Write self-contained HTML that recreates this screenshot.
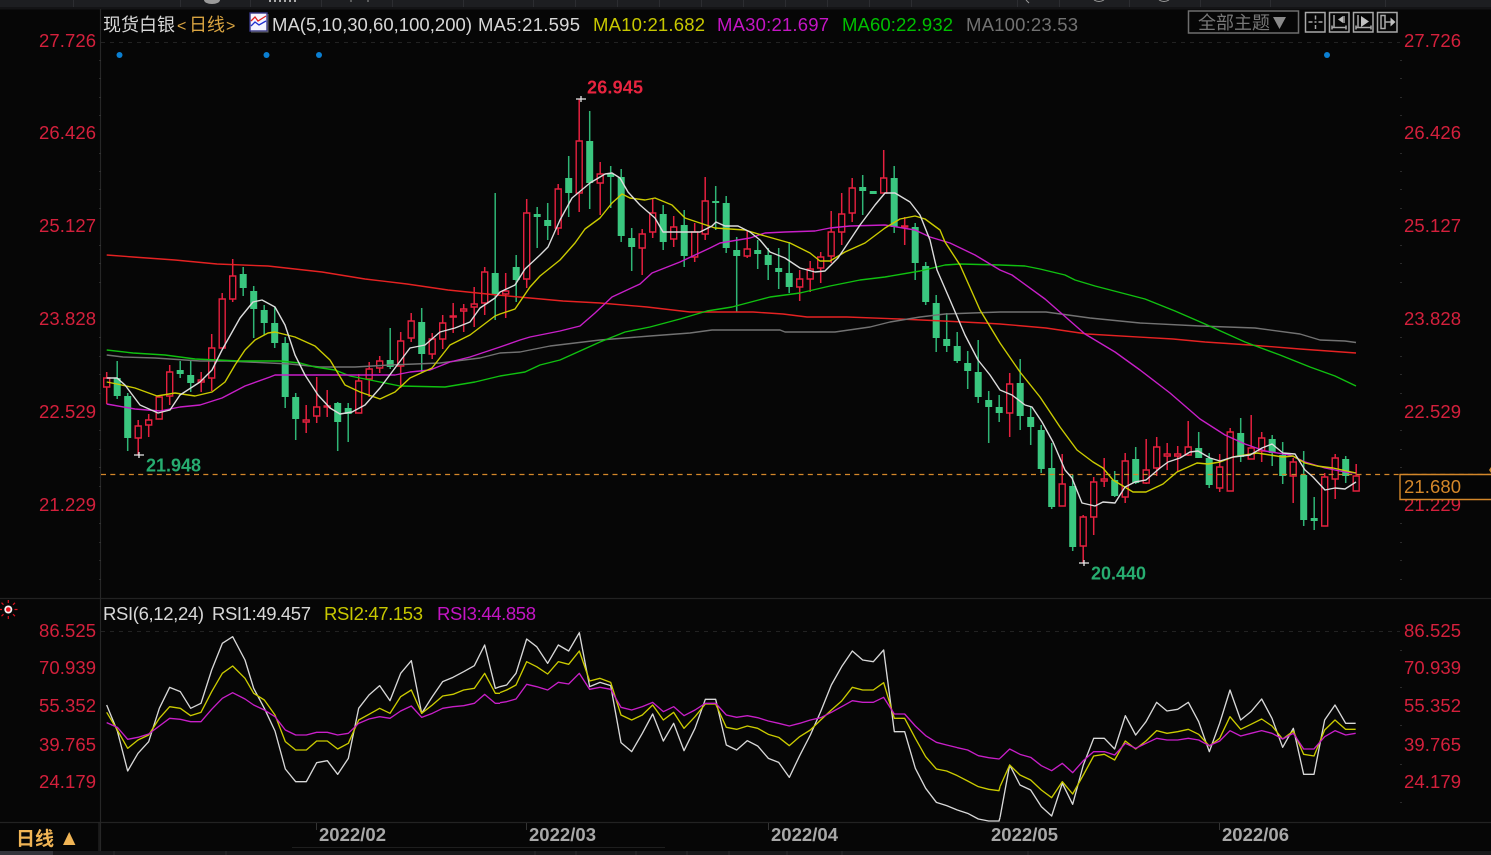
<!DOCTYPE html>
<html lang="zh"><head><meta charset="utf-8"><title>现货白银 日线</title>
<style>
html,body{margin:0;padding:0;background:#060606;width:1491px;height:855px;overflow:hidden}
svg{display:block;position:absolute;left:0;top:0;filter:blur(.35px)}
text{font-family:"Liberation Sans","Noto Sans CJK SC",sans-serif;font-size:18.5px}
.r text{fill:#d4203c}
</style></head><body>
<svg width="1491" height="855" viewBox="0 0 1491 855" xmlns="http://www.w3.org/2000/svg">
<rect width="1491" height="855" fill="#060606"/>
<!-- top strip -->
<rect width="1491" height="7" fill="#1d1e21"/><rect y="7" width="1491" height="2.5" fill="#141416"/>
<path d="M73.5 0V7M180.5 0V7M250.5 0V7M321.5 0V7M392.5 0V7M463.5 0V7M533.5 0V7M575.5 0V7M617.5 0V7M659.5 0V7M701.5 0V7M743.5 0V7M785.5 0V7M827.5 0V7M869.5 0V7M911.5 0V7M1017.5 0V7M1059.5 0V7M1129.5 0V7M1200.5 0V7M1270.5 0V7M1385.5 0V7" stroke="#2c2d31" stroke-width="1"/>
<path d="M204 0h16a8 4 0 0 1-16 0z" fill="#9a9a9a"/>
<path d="M269 0v2h2v-2zM274 0v2h2v-2zM279 0v2h2v-2zM284 0v2h2v-2zM289 0v2h2v-2zM294 0v2h2v-2z" fill="#aaa"/>
<path d="M351 0v2M368 0v2M1026 0l3 3M1094 0q5 3 10 0M1159 0q5 3 10 0" stroke="#999" fill="none"/>
<!-- frame -->
<path d="M0 598.5H1491M0 822.5H1491" stroke="#222" stroke-width="1.2"/>
<path d="M100.5 9V851M99 822V851" stroke="#262626" stroke-width="1.2"/>
<path d="M292 847.5H665" stroke="#1e1e1e"/>
<path d="M101 42.5H1400M101 631.5H1400" stroke="#222" stroke-dasharray="4 5"/>
<path d="M100 60v1M100 78v1M100 97v1M100 115v1M100 153v1M100 171v1M100 189v1M100 208v1M100 245v1M100 263v1M100 282v1M100 337v1M100 356v1M100 374v1M100 393v1M100 430v1M100 449v1M100 467v1M100 486v1M100 523v1M100 542v1M100 560v1M100 579v1M1401 60v1M1401 78v1M1401 97v1M1401 115v1M1401 153v1M1401 171v1M1401 189v1M1401 208v1M1401 245v1M1401 263v1M1401 282v1M1401 337v1M1401 356v1M1401 374v1M1401 393v1M1401 430v1M1401 449v1M1401 467v1M1401 523v1M1401 542v1M1401 560v1M1401 579v1M1401 650v1M1401 687v1M1401 725v1M1401 764v1M1401 802v1" stroke="#3a3a3a" stroke-width="1.4"/>
<path d="M316.5 823v7M526.5 823v7M768.5 823v7M1219.5 823v7" stroke="#333"/>
<!-- bottom strip -->
<rect y="851" width="1491" height="4" fill="#19191b"/><rect y="851" width="53" height="4" fill="#33343a"/>
<path d="M114 851v4M226 851v4M535 851v4M576 851v4M636 851v4M687 851v4M729 851v4M787 851v4M842 851v4M1028 851v4" stroke="#2c2c2e"/>
<!-- blue dots -->
<g fill="#0a7fd2"><circle cx="119.5" cy="55" r="3"/><circle cx="266.5" cy="55" r="3"/><circle cx="319" cy="55" r="3"/><circle cx="1327" cy="55" r="3"/></g>
<!-- wicks -->
<path fill="none" stroke="#2fb575" stroke-width="1.5" d="M117.2 361V399M127.7 393V451M180.2 361V378M190.7 361V392M243.2 267V296M253.7 286V338M264.2 305V335M274.7 307V348M285.2 337V408M295.7 393V440M337.7 402V451M348.2 403V442M390.2 328V369M421.7 308V372M495.2 193V320M516.2 255V302M537.2 207V248M547.7 203V240M568.7 156V217M589.7 111V209M610.7 166V208M621.2 169V242M631.7 228V271M663.2 205V250M684.2 210V267M715.7 186V230M726.2 196V253M736.7 237V312M757.7 240V269M768.2 248V280M778.7 248V289M789.2 242V293M862.7 175V215M894.2 166V233M915.2 223V280M925.7 262V305M936.2 295V352M946.7 313V352M957.2 332V363M967.7 351V389M978.2 340V403M988.7 391V443M999.2 395V422M1020.2 359V430M1030.7 407V445M1041.2 425V473M1051.7 443V509M1072.7 475V551M1114.7 471V497M1135.7 447V484M1198.7 432V458M1209.2 453V488M1240.7 418V462M1272.2 435V466M1282.7 442V484M1303.7 451V526M1314.2 497V530M1345.7 456V483"/>
<path fill="none" stroke="#e5203f" stroke-width="1.5" d="M106.7 372V404M138.2 420V455M148.7 414V437M159.2 395V419M169.7 365V405M201.2 372V392M211.7 334V391M222.2 293V348M232.7 259V302M306.2 405V433M316.7 377V423M327.2 390V417M358.7 374V413M369.2 362V397M379.7 356V373M400.7 332V388M411.2 313V342M432.2 333V359M442.7 315V349M453.2 303V333M463.7 304V332M474.2 287V327M484.7 267V315M505.7 273V318M526.7 199V288M558.2 184V235M579.2 99V212M600.2 162V215M642.2 229V275M652.7 199V238M673.7 216V247M694.7 223V262M705.2 177V240M747.2 230V258M799.7 270V301M810.2 261V292M820.7 252V283M831.2 211V263M841.7 193V245M852.2 178V222M883.7 150V193M904.7 217V245M1009.7 373V437M1062.2 454V506M1083.2 515V563M1093.7 477V535M1104.2 458V487M1125.2 453V503M1146.2 439V484M1156.7 437V476M1167.2 443V470M1177.7 446V472M1188.2 421V456M1219.7 454V492M1230.2 428V491M1251.2 415V459M1261.7 432V462M1293.2 458V503M1324.7 473V526M1335.2 454V499M1356.2 464V491"/>
<!-- green bodies -->
<path fill="#3ac77f" d="M113.7 378h7V396h-7zM124.2 396h7V438h-7zM176.7 370h7V374h-7zM187.2 375h7V383h-7zM239.7 274h7V288h-7zM250.2 291h7V309h-7zM260.7 310h7V323h-7zM271.2 323h7V343h-7zM281.7 343h7V397h-7zM292.2 397h7V419h-7zM334.2 403h7V422h-7zM344.7 408h7V414h-7zM386.7 360h7V367h-7zM418.2 322h7V354h-7zM491.7 273h7V294h-7zM512.7 267h7V280h-7zM533.7 214h7V217h-7zM544.2 220h7V226h-7zM565.2 178h7V193h-7zM586.2 141h7V183h-7zM607.2 174h7V177h-7zM617.7 177h7V236h-7zM628.2 238h7V247h-7zM659.7 214h7V242h-7zM680.7 225h7V256h-7zM712.2 201h7V203h-7zM722.7 203h7V248h-7zM733.2 250h7V256h-7zM754.2 250h7V254h-7zM764.7 255h7V265h-7zM775.2 268h7V272h-7zM785.7 273h7V287h-7zM859.2 187h7V191h-7zM869.7 191h7V194h-7zM890.7 178h7V227h-7zM911.7 227h7V263h-7zM922.2 266h7V302h-7zM932.7 303h7V338h-7zM943.2 339h7V346h-7zM953.7 346h7V361h-7zM964.2 363h7V371h-7zM974.7 372h7V397h-7zM985.2 400h7V407h-7zM995.7 407h7V413h-7zM1016.7 383h7V416h-7zM1027.2 417h7V427h-7zM1037.7 430h7V469h-7zM1048.2 468h7V507h-7zM1069.2 486h7V547h-7zM1111.2 480h7V496h-7zM1132.2 459h7V483h-7zM1195.2 448h7V458h-7zM1205.7 458h7V485h-7zM1237.2 433h7V457h-7zM1268.7 439h7V453h-7zM1279.2 455h7V476h-7zM1300.2 475h7V520h-7zM1310.7 518h7V521h-7zM1342.2 459h7V476h-7z"/>
<!-- red bodies -->
<path fill="#060606" stroke="#e5203f" stroke-width="1.4" d="M103.7 378h6V387h-6zM135.2 426h6V438h-6zM145.7 420h6V425h-6zM156.2 397h6V419h-6zM166.7 372h6V396h-6zM198.2 380h6V382h-6zM208.7 348h6V378h-6zM219.2 299h6V348h-6zM229.7 276h6V299h-6zM303.2 420h6V422h-6zM313.7 407h6V416h-6zM324.2 406h6V407h-6zM355.7 381h6V413h-6zM366.2 369h6V379h-6zM376.7 361h6V368h-6zM397.7 341h6V366h-6zM408.2 321h6V338h-6zM429.2 339h6V354h-6zM439.7 323h6V339h-6zM450.2 316h6V317h-6zM460.7 309h6V311h-6zM471.2 304h6V307h-6zM481.7 272h6V303h-6zM502.7 291h6V294h-6zM523.7 213h6V279h-6zM555.2 189h6V228h-6zM576.2 141h6V193h-6zM597.2 174h6V183h-6zM639.2 234h6V248h-6zM649.7 213h6V232h-6zM670.7 227h6V239h-6zM691.7 232h6V257h-6zM702.2 201h6V234h-6zM744.2 249h6V256h-6zM796.7 279h6V287h-6zM807.2 269h6V279h-6zM817.7 257h6V268h-6zM828.2 232h6V256h-6zM838.7 214h6V232h-6zM849.2 188h6V213h-6zM880.7 178h6V193h-6zM901.7 226h6V227h-6zM1006.7 384h6V413h-6zM1059.2 484h6V506h-6zM1080.2 517h6V546h-6zM1090.7 482h6V517h-6zM1101.2 479h6V481h-6zM1122.2 461h6V497h-6zM1143.2 470h6V483h-6zM1153.7 447h6V468h-6zM1164.2 454h6V456h-6zM1174.7 454h6V456h-6zM1185.2 447h6V455h-6zM1216.7 467h6V488h-6zM1227.2 432h6V491h-6zM1248.2 448h6V459h-6zM1258.7 438h6V451h-6zM1290.2 462h6V476h-6zM1321.7 477h6V526h-6zM1332.2 458h6V479h-6zM1353.2 476h6V491h-6z"/>
<!-- last price dashed -->
<path d="M101 474.5H1491" stroke="#d4872a" stroke-width="1.3" stroke-dasharray="5 4.3"/>
<path d="M1489 470l2-3v6z" fill="#c8862a"/>
<!-- MA lines -->
<g fill="none" stroke-width="1.4" stroke-linejoin="round">
<polyline stroke="#e52222" points="106.7,255 133,257 175,260 217,264 268,266 322,272 365,279 407,284 448,290 497,295 530,298 563,301 600,303 647,307 690,312 753,312 783,314 807,317 847,317 900,319 943,321 983,323 1000,324 1046,328 1087,334 1173,339 1205,342 1250,345 1300,349 1356,353"/>
<polyline stroke="#727272" points="106.7,355 123,357 155,358 200,361 227,361 290,364 320,367 355,367 390,365 440,363 480,358 500,353 520,352 550,346 600,340 650,336 690,333 712,330 780,330 785,332 835,332 870,327 890,322 920,317 945,314 1000,312 1046,312 1090,318 1140,323 1200,326 1255,328 1300,334 1320,340 1345,341 1356,342.5"/>
<polyline stroke="#10c010" points="106.7,350 133,353 165,355 195,359 240,361 280,361 300,363 315,367 335,370 350,376 375,381 400,386 445,387 475,382 500,376 525,372 540,365 560,360 600,342 625,332 650,327 680,319 707,311 732,307 770,297 800,293 830,286 860,280 885,277 920,271 945,265 960,264 1000,265 1025,266 1040,269 1065,275 1075,280 1095,286 1145,299 1175,311 1205,324 1245,342 1280,355 1310,367 1335,376 1356,386"/>
<polyline stroke="#c81fc8" points="106.7,404 135,409 160,411 180,407 200,405 222,398 245,386 270,377 275,375 300,375 345,375 395,375 410,372 430,370 450,362 470,357 500,347 520,340 530,337 560,331 580,326 595,313 612,297 640,284 652,273 680,262 710,248 720,243 750,238 765,233 785,232 815,231 830,228 850,226 885,225 915,230 930,237 950,243 975,255 1000,270 1012,275 1045,299 1085,334 1115,352 1140,370 1170,393 1200,419 1225,435 1245,444 1265,451 1290,455 1305,462 1325,468 1345,472 1356,473"/>
<polyline stroke="#cbcb00" points="106.7,382 117,384 135,388 157,396 175,393 195,396 212,392 225,382 235,365 245,350 255,340 268,333 275,332 295,337 315,346 330,360 345,385 360,392 380,399 395,392 410,378 432,368 450,345 470,335 495,316 500,314 515,309 530,287 540,276 560,260 575,243 585,229 600,218 612,203 622,194 630,198 645,200 655,198 672,205 685,218 700,223 715,228 745,230 765,236 790,243 810,253 820,261 830,261 845,252 865,243 885,228 900,219 915,216 925,219 940,230 945,242 960,265 980,310 1000,343 1020,372 1040,397 1060,427 1077,450 1093,462 1103,468 1113,480 1133,492 1146,492 1163,484 1177,472 1197,463 1208,464 1220,462 1233,457 1257,453 1283,457 1293,456 1305,463 1317,466 1333,468 1356,473"/>
<polyline stroke="#dcdcdc" points="106.7,378 117,378 125,385 140,405 158,413 170,410 180,395 200,382 212,370 222,350 240,318 253,302 262,300 275,307 285,325 295,355 305,375 318,395 330,408 340,414 352,412 365,405 380,388 395,368 410,348 425,345 440,332 455,328 470,322 480,308 495,298 500,292 515,285 525,269 540,255 548,247 560,220 572,198 590,183 605,174 612,173 620,178 628,192 640,205 655,218 663,232 672,232 700,232 712,226 716,222 725,226 738,226 750,232 760,240 770,252 785,258 800,268 815,272 825,271 838,258 850,240 860,225 875,205 885,193 895,193 910,202 920,215 930,240 937,270 950,300 965,335 978,360 990,375 1000,390 1012,395 1025,405 1032,407 1042,422 1053,442 1065,470 1072,478 1082,503 1095,506 1103,502 1115,503 1125,487 1135,482 1146,480 1160,468 1168,462 1180,458 1190,452 1198,451 1210,458 1220,461 1233,457 1250,455 1262,448 1272,444 1283,453 1295,454 1305,470 1313,477 1325,490 1335,488 1345,489 1356,482"/>
</g>
<!-- extreme markers -->
<path d="M576 99h10M581 96v6M134 455h10M139 452v6M1079 563h10M1084 560v6" stroke="#e8e8e8" stroke-width="1.3"/>
<text x="587" y="93.5" textLength="56" fill="#e8243f" font-weight="bold" style="font-size:18px">26.945</text>
<text x="146" y="471.500" textLength="55" fill="#27ad70" font-weight="bold" style="font-size:18px">21.948</text>
<text x="1091" y="579.500" textLength="55" fill="#27ad70" font-weight="bold" style="font-size:18px">20.440</text>
<!-- axis labels -->
<g class="r">
<text x="39" y="47" textLength="57">27.726</text><text x="39" y="139" textLength="57">26.426</text><text x="39" y="232" textLength="57">25.127</text><text x="39" y="325" textLength="57">23.828</text><text x="39" y="418" textLength="57">22.529</text><text x="39" y="511" textLength="57">21.229</text>
<text x="39" y="637" textLength="57">86.525</text><text x="39" y="674" textLength="57">70.939</text><text x="39" y="712" textLength="57">55.352</text><text x="39" y="751" textLength="57">39.765</text><text x="39" y="788" textLength="57">24.179</text>
<text x="1404" y="47" textLength="57">27.726</text><text x="1404" y="139" textLength="57">26.426</text><text x="1404" y="232" textLength="57">25.127</text><text x="1404" y="325" textLength="57">23.828</text><text x="1404" y="418" textLength="57">22.529</text><text x="1404" y="511" textLength="57">21.229</text>
<text x="1404" y="637" textLength="57">86.525</text><text x="1404" y="674" textLength="57">70.939</text><text x="1404" y="712" textLength="57">55.352</text><text x="1404" y="751" textLength="57">39.765</text><text x="1404" y="788" textLength="57">24.179</text>
</g>
<!-- price box -->
<rect x="1400" y="474.5" width="91" height="25" fill="#050505"/>
<path d="M1491 474.5H1400V499.5H1491" fill="none" stroke="#d4872a" stroke-width="1.4"/>
<text x="1404" y="493" textLength="57" fill="#d4872a">21.680</text>
<!-- header -->
<text x="103" y="31" fill="#d8d8d8" style="font-size:18px">现货白银</text>
<text x="177" y="31" fill="#d9a441" style="font-size:16px">&lt;</text>
<text x="189" y="31" fill="#d9a441" style="font-size:18px">日线</text>
<text x="226" y="31" fill="#d9a441" style="font-size:16px">&gt;</text>
<rect x="250" y="13" width="17" height="18" fill="#f4f4ff" stroke="#3a3a8c" stroke-width="1.4"/>
<path d="M251 21l4-4 3 4 8-5" stroke="#e02020" fill="none" stroke-width="1.3"/>
<path d="M251 26l4-4 4 3 7-4" stroke="#2030d0" fill="none" stroke-width="1.3"/>
<path d="M268 14v18h-17" stroke="#666" fill="none"/>
<text x="272" y="31" textLength="200" fill="#d8d8d8">MA(5,10,30,60,100,200)</text>
<text x="478" y="31" textLength="102" fill="#d8d8d8">MA5:21.595</text>
<text x="593" y="31" textLength="112" fill="#c8c800">MA10:21.682</text>
<text x="717" y="31" textLength="112" fill="#c415c4">MA30:21.697</text>
<text x="842" y="31" textLength="111" fill="#00c000">MA60:22.932</text>
<text x="966" y="31" textLength="112" fill="#727272">MA100:23.53</text>
<!-- theme button -->
<rect x="1188.5" y="11" width="110" height="22" fill="none" stroke="#6e6e6e" stroke-width="1.5"/>
<text x="1198" y="29" fill="#777" style="font-size:18px">全部主题</text>
<path d="M1273 17h13l-6.500 12z" fill="#8a8a8a"/>
<g fill="none" stroke="#a8a8a8" stroke-width="1.5">
<rect x="1305.500" y="12.500" width="19.500" height="19.500"/><rect x="1329.500" y="12.500" width="19.500" height="19.500"/><rect x="1353.500" y="12.500" width="19.500" height="19.500"/><rect x="1377.500" y="12.500" width="19.500" height="19.500"/>
<path d="M1315.500 15.500v4M1315.500 25v4M1308.500 22h4M1318.500 22h4M1314.500 22h2"/>
<path d="M1334 15v13M1344 16v7M1332 27.500h14M1332 25.500v4M1346 25.500v4"/>
<path d="M1358 15v13M1356 27.500h15M1356 25.500v4M1371 25.500v4"/>
<path d="M1381 15.500h4v13h-4zM1385 22h8"/>
</g>
<path d="M1338 19.500l5-3.500v7z" fill="#bbb"/>
<path d="M1361 16l8 5.500-8 5.500z" fill="#c0c0c0"/>
<path d="M1395.500 22l-5-4.500v9z" fill="#c0c0c0"/>
<!-- RSI header -->
<text x="103" y="620" textLength="101" fill="#d8d8d8">RSI(6,12,24)</text>
<text x="212" y="620" textLength="99" fill="#d8d8d8">RSI1:49.457</text>
<text x="324" y="620" textLength="99" fill="#c8c800">RSI2:47.153</text>
<text x="437" y="620" textLength="99" fill="#c415c4">RSI3:44.858</text>
<!-- red dot icon -->
<circle cx="8.300" cy="609.500" r="4" fill="#f2f2f2"/><circle cx="8.300" cy="609.500" r="2.300" fill="#e8101c"/>
<path d="M8.300 600v3M8.300 616v3M-1 609.500h3M14.500 609.500h3M1.500 602.700l2 2M13 614.200l2 2M1.500 616.200l2-2M13 604.800l2-2" stroke="#d8121f" stroke-width="1.200"/>
<!-- RSI lines -->
<g fill="none" stroke-width="4" stroke-linejoin="round">
<g stroke="#d8d8d8">
<polyline transform="translate(0 595) scale(.33333)" points="320,330 352,408 383,528 414,475 446,440 478,340 509,277 541,290 572,340 603,325 635,225 667,145 698,125 735,195 761,280 793,340 825,408 856,522 887,560 919,560 950,503 982,497 1013,538 1045,490 1076,340 1107,300 1139,272 1170,317 1202,235 1234,197 1265,355 1297,305 1328,260 1359,247 1391,230 1423,212 1454,150 1486,280 1500,275"/>
<polyline transform="translate(500 595) scale(.33333)" points="0,275 20,270 48,235 80,132 110,155 143,205 175,150 206,168 238,113 269,275 300,262 332,272 363,443 395,470 427,415 458,357 490,438 521,385 552,467 585,400 616,313 647,313 679,450 710,465 742,437 773,453 805,490 836,502 868,547 899,482 931,420 962,350 994,270 1025,215 1057,168 1088,195 1120,200 1151,165 1183,410 1214,410 1246,520 1277,580 1309,622 1340,632 1372,645 1403,655 1435,672 1466,678 1497,678 1500,668"/>
<polyline transform="translate(1000 595) scale(.33333)" points="0,668 29,510 60,570 92,585 124,635 155,663 187,565 218,628 250,510 281,430 313,430 344,462 376,362 407,420 438,380 470,322 501,348 533,343 565,322 596,380 628,470 659,385 690,285 722,375 753,350 785,312 816,370 848,457 880,400 911,538 942,538 974,375 1005,330 1037,385 1067,385"/>
</g>
<g stroke="#cbcb00">
<polyline transform="translate(0 595) scale(.33333)" points="320,352 352,405 383,460 414,435 446,420 478,370 509,335 541,340 572,362 603,352 635,290 667,235 698,213 735,250 761,295 793,315 825,360 856,440 887,465 919,465 950,438 982,438 1013,462 1045,445 1076,375 1107,358 1139,340 1170,355 1202,305 1234,285 1265,355 1297,330 1328,303 1359,298 1391,285 1423,280 1454,235 1486,295 1500,295"/>
<polyline transform="translate(500 595) scale(.33333)" points="0,293 20,285 48,270 80,200 110,215 143,237 175,200 206,208 238,168 269,258 300,250 332,262 363,360 395,375 427,360 458,330 490,375 521,352 552,400 585,365 616,327 647,327 679,397 710,403 742,393 773,400 805,418 836,427 868,452 899,425 931,405 962,375 994,345 1025,318 1057,277 1088,285 1120,285 1151,263 1183,370 1214,370 1246,430 1277,485 1309,522 1340,528 1372,542 1403,558 1435,575 1466,583 1497,587 1500,575"/>
<polyline transform="translate(1000 595) scale(.33333)" points="0,575 29,510 60,540 92,555 124,585 155,608 187,560 218,597 250,540 281,483 313,478 344,495 376,438 407,462 438,438 470,407 501,415 533,410 565,403 596,418 628,453 659,430 690,365 722,403 753,388 785,372 816,393 848,432 880,408 911,478 942,483 974,405 1005,375 1037,403 1067,403"/>
</g>
<g stroke="#c81fc8">
<polyline transform="translate(0 595) scale(.33333)" points="320,383 352,397 383,433 414,427 446,417 478,393 509,370 541,373 572,380 603,380 635,343 667,310 698,293 735,312 761,330 793,345 825,365 856,405 887,420 919,420 950,412 982,412 1013,420 1045,415 1076,385 1107,372 1139,365 1170,370 1202,348 1234,333 1265,367 1297,355 1328,340 1359,335 1391,332 1423,325 1454,298 1486,325 1500,325"/>
<polyline transform="translate(500 595) scale(.33333)" points="0,323 20,320 48,312 80,268 110,275 143,285 175,262 206,267 238,235 269,283 300,277 332,283 363,337 395,345 427,335 458,322 490,350 521,335 552,362 585,345 616,325 647,325 679,360 710,367 742,362 773,368 805,378 836,385 868,393 899,385 931,375 962,368 994,352 1025,335 1057,317 1088,322 1120,322 1151,307 1183,357 1214,357 1246,393 1277,422 1309,442 1340,450 1372,458 1403,465 1435,482 1466,488 1497,492 1500,490"/>
<polyline transform="translate(1000 595) scale(.33333)" points="0,490 29,462 60,478 92,487 124,512 155,527 187,505 218,533 250,497 281,470 313,470 344,480 376,445 407,460 438,445 470,430 501,435 533,435 565,430 596,435 628,452 659,438 690,407 722,423 753,415 785,407 816,415 848,432 880,415 911,462 942,462 974,425 1005,407 1037,420 1067,415"/>
</g>
</g>
<!-- date axis -->
<g fill="#a8a8a8" font-weight="bold">
<text x="319" y="841" textLength="67">2022/02</text><text x="529" y="841" textLength="67">2022/03</text><text x="771" y="841" textLength="67">2022/04</text><text x="991" y="841" textLength="67">2022/05</text><text x="1222" y="841" textLength="67">2022/06</text>
</g>
<text x="16" y="845" fill="#f0b455" font-weight="bold" style="font-size:19px">日线</text>
<path d="M63 845l6.200-13 6.200 13z" fill="#f0b455"/>
</svg>
</body></html>
